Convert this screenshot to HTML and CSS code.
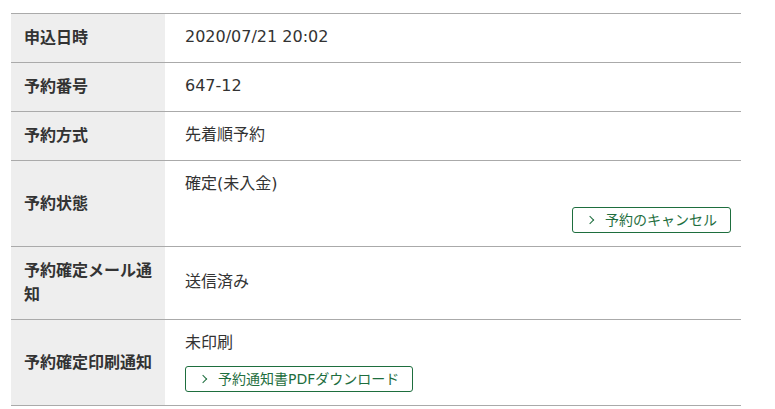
FILE: index.html
```html
<!DOCTYPE html>
<html lang="ja">
<head>
<meta charset="utf-8">
<link rel="stylesheet" href="styles.css">
</head>
<body>
<table class="info">
  <tr><th>申込日時</th><td>2020/07/21 20:02</td></tr>
  <tr><th>予約番号</th><td>647-12</td></tr>
  <tr><th>予約方式</th><td>先着順予約</td></tr>
  <tr><th>予約状態</th><td><div>確定(未入金)</div><div class="actions right"><a class="btn" href="#"><span class="chev"></span>予約のキャンセル</a></div></td></tr>
  <tr><th>予約確定メール通知</th><td>送信済み</td></tr>
  <tr><th>予約確定印刷通知</th><td><div>未印刷</div><div class="actions"><a class="btn" href="#"><span class="chev"></span>予約通知書PDFダウンロード</a></div></td></tr>
</table>
</body>
</html>
```
FILE: styles.css
```css
html, body { margin: 0; padding: 0; background: #fff; }
body {
  padding: 13px 34px 0 11px;
  font-family: "DejaVu Sans", "Noto Sans CJK JP", sans-serif;
  color: #333;
  font-size: 16px;
}
.info {
  width: 730px;
  border-collapse: collapse;
}
.info th, .info td {
  border-top: 1px solid #aaa;
  border-bottom: 1px solid #aaa;
  line-height: 24px;
  vertical-align: middle;
  text-align: left;
}
.info th {
  width: 154px;
  box-sizing: border-box;
  background: #eeeeee;
  padding: 10px 8px 14px 13px;
  font-weight: bold;
  font-family: "Noto Sans CJK JP", sans-serif;
}
.info td {
  padding: 11px 10px 13px 20px;
  font-weight: normal;
}
.actions { margin-top: 11px; display: flex; }
.actions.right { justify-content: flex-end; }
.btn {
  display: inline-flex;
  align-items: center;
  height: 26px;
  box-sizing: border-box;
  border: 1px solid #1e6e3e;
  border-radius: 3px;
  color: #1e6e3e;
  text-decoration: none;
  font-size: 14px;
  line-height: 24px;
  padding: 0 13px 0 14px;
}
.chev {
  width: 5px; height: 5px;
  border-top: 1.5px solid #1e6e3e;
  border-right: 1.5px solid #1e6e3e;
  transform: rotate(45deg);
  margin-right: 12px;
}
```
